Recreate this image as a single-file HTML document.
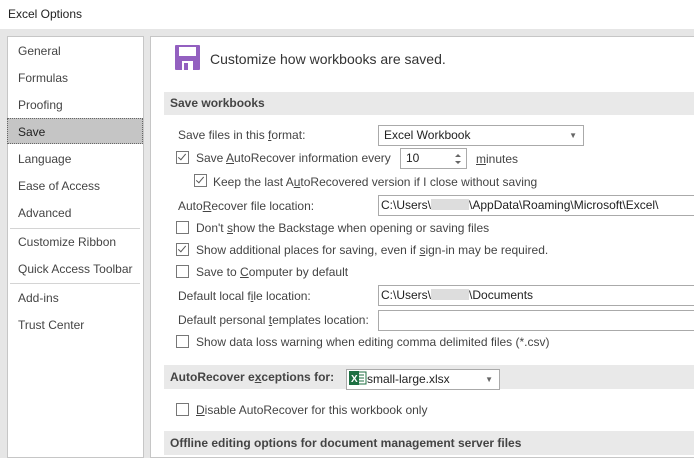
<!DOCTYPE html>
<html><head><style>
body{margin:0;width:694px;height:452px;background:#e6e6e6;font-family:"Liberation Sans",sans-serif;position:relative;overflow:hidden;color:#444;font-size:12px}
.a{position:absolute;white-space:nowrap}
#title{left:0;top:0;width:694px;height:29px;background:#fff}
#left{left:7px;top:36px;width:135px;height:420px;background:#fff;border:1px solid #c6c6c6}
#right{left:150px;top:36px;width:550px;height:420px;background:#fff;border:1px solid #c6c6c6}
.nav{left:18px;font-size:12px;color:#444}
.sep{left:10px;width:130px;height:1px;background:#d4d4d4}
.bar{left:164px;width:530px;background:#e9e9e9;font-weight:bold;color:#444}
.cb{width:11px;height:11px;border:1px solid #777;background:#fff}
.cb.c::after{content:"";position:absolute;left:3px;top:0px;width:3px;height:7px;border:solid #555;border-width:0 1.5px 1.5px 0;transform:rotate(40deg)}
.box{border:1px solid #aaa;background:#fff;height:19px;line-height:19px;padding-left:5px;color:#222}
.blur{display:inline-block;width:38px;height:11px;background:#ddd;vertical-align:-1px}
</style></head><body>
<div id="title" class="a"><span class="a" style="left:8px;top:7px;font-size:12px;color:#222">Excel Options</span></div>
<div id="left" class="a"></div>
<div id="right" class="a"></div>
<div class="a" style="left:7px;top:118px;width:136px;height:26px;background:#c5c5c5;border:1px dotted #666;box-sizing:border-box"></div>
<span class="a nav" style="top:44px">General</span>
<span class="a nav" style="top:71px">Formulas</span>
<span class="a nav" style="top:98px">Proofing</span>
<span class="a nav" style="top:125px;color:#222">Save</span>
<span class="a nav" style="top:152px">Language</span>
<span class="a nav" style="top:179px">Ease of Access</span>
<span class="a nav" style="top:206px">Advanced</span>
<div class="a sep" style="top:228px"></div>
<span class="a nav" style="top:235px">Customize Ribbon</span>
<span class="a nav" style="top:262px">Quick Access Toolbar</span>
<div class="a sep" style="top:283px"></div>
<span class="a nav" style="top:291px">Add-ins</span>
<span class="a nav" style="top:318px">Trust Center</span>

<svg class="a" style="left:175px;top:45px" width="26" height="26" viewBox="0 0 26 26"><rect x="0" y="0" width="25" height="25" rx="1" fill="#9360c0"/><rect x="4" y="2" width="17" height="9" fill="#fff"/><rect x="7" y="16" width="11" height="9" fill="#fff"/><rect x="9" y="18" width="4" height="7" fill="#9360c0"/></svg>
<span class="a" style="left:210px;top:51px;font-size:14px;color:#333">Customize how workbooks are saved.</span>

<div class="a bar" style="top:92px;height:23px;line-height:23px;padding-left:6px;box-sizing:border-box">Save workbooks</div>
<span class="a" style="left:178px;top:128px">Save files in this <u>f</u>ormat:</span>
<div class="a box" style="left:378px;top:125px;width:199px;height:19px">Excel Workbook<span class="a" style="right:6px;top:0;font-size:8px;color:#666">▼</span></div>
<div class="a cb c" style="left:176px;top:151px"></div>
<span class="a" style="left:196px;top:151px">Save <u>A</u>utoRecover information every</span>
<div class="a box" style="left:400px;top:148px;width:60px">10
<svg class="a" style="right:5px;top:4px" width="6" height="12" viewBox="0 0 6 12"><path d="M0 4L3 1L6 4Z M0 8L3 11L6 8Z" fill="#666"/></svg></div>
<span class="a" style="left:476px;top:152px"><u>m</u>inutes</span>
<div class="a cb c" style="left:194px;top:174px"></div>
<span class="a" style="left:213px;top:175px">Keep the last A<u>u</u>toRecovered version if I close without saving</span>
<span class="a" style="left:178px;top:199px">Auto<u>R</u>ecover file location:</span>
<div class="a box" style="left:378px;top:195px;width:316px;padding-left:2px">C:\Users\<span class="blur"></span>\AppData\Roaming\Microsoft\Excel\</div>
<div class="a cb" style="left:176px;top:221px"></div>
<span class="a" style="left:196px;top:221px">Don't <u>s</u>how the Backstage when opening or saving files</span>
<div class="a cb c" style="left:176px;top:243px"></div>
<span class="a" style="left:196px;top:243px">Show additional places for saving, even if <u>s</u>ign-in may be required.</span>
<div class="a cb" style="left:176px;top:265px"></div>
<span class="a" style="left:196px;top:265px">Save to <u>C</u>omputer by default</span>
<span class="a" style="left:178px;top:289px">Default local f<u>i</u>le location:</span>
<div class="a box" style="left:378px;top:285px;width:316px;padding-left:2px">C:\Users\<span class="blur"></span>\Documents</div>
<span class="a" style="left:178px;top:313px">Default personal <u>t</u>emplates location:</span>
<div class="a box" style="left:378px;top:310px;width:316px"></div>
<div class="a cb" style="left:176px;top:335px"></div>
<span class="a" style="left:196px;top:335px">Show data loss warning when editing comma delimited files (*.csv)</span>

<div class="a bar" style="top:365px;height:24px;line-height:24px;padding-left:6px;box-sizing:border-box">AutoRecover e<u>x</u>ceptions for:</div>
<div class="a box" style="left:346px;top:369px;width:150px;height:19px;line-height:19px;padding-left:2px"><svg width="18" height="14" style="vertical-align:-2px" viewBox="0 0 18 14"><rect x="6" y="1" width="11" height="12" fill="#fff" stroke="#1d6f42"/><path d="M9 4h6M9 7h6M9 10h6" stroke="#1d6f42"/><rect x="0" y="0" width="10" height="14" fill="#1d6f42"/><text x="2" y="11" fill="#fff" font-size="10" font-weight="bold" font-family="Liberation Sans">X</text></svg>small-large.xlsx<span class="a" style="right:6px;top:0;font-size:8px;color:#666">▼</span></div>
<div class="a cb" style="left:176px;top:403px"></div>
<span class="a" style="left:196px;top:403px"><u>D</u>isable AutoRecover for this workbook only</span>
<div class="a bar" style="top:431px;height:24px;line-height:24px;padding-left:6px;box-sizing:border-box">Offline editing options for document management server files</div>
</body></html>
